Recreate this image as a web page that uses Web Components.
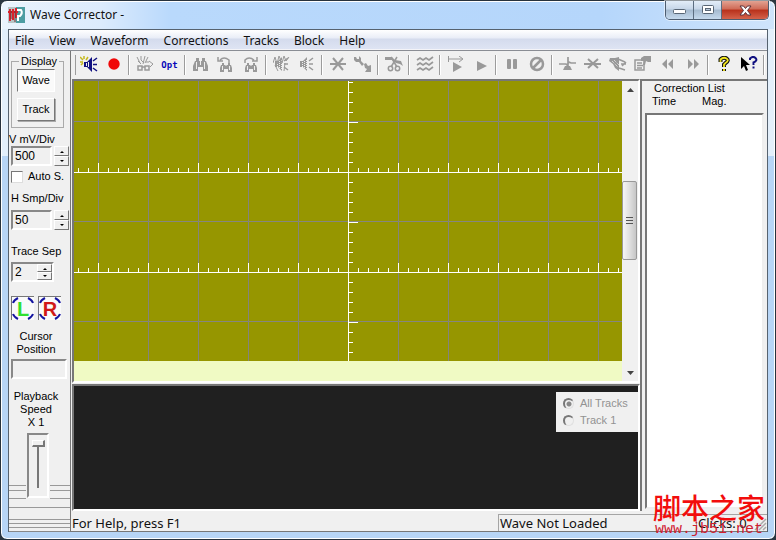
<!DOCTYPE html>
<html lang="en">
<head>
<meta charset="utf-8">
<title>Wave Corrector</title>
<style>
html,body{height:100%;margin:0}
body{background:#2b3640;font:12px/16px "Noto Sans","Noto Sans CJK SC",sans-serif;color:#111}
</style>
</head>
<body>
<app-window></app-window>
<script>
const define=(name,html,init)=>{
  const t=document.createElement('template');
  t.innerHTML='<style>:host,*{box-sizing:border-box}button,input{font:inherit;color:inherit;margin:0;padding:0;border:0;background:none;border-radius:0}svg{display:block}</style>'+html;
  customElements.define(name,class extends HTMLElement{
    constructor(){super();this.attachShadow({mode:'open'}).append(t.content.cloneNode(true));if(init)init(this,this.shadowRoot);}
  });
};

define('title-bar',`<style>
:host{display:flex;height:28px;padding-left:1px;flex:none}
.logo{margin-top:6px;flex:none}
h1{font:inherit;margin:5px 0 0 5px;flex:1;line-height:18px}
.btns{display:flex;height:19px;border:1px solid #4d5d70;border-top:0;border-radius:0 0 5px 5px;overflow:hidden;margin-right:0;box-shadow:0 0 0 1px #ffffff80}
button{width:28px;display:flex;align-items:center;justify-content:center;background:linear-gradient(#e3edf8,#c6d6e8 45%,#a5bacf 50%,#c5d9ed);border-right:1px solid #5c6d80}
button:last-child{width:46px;border:0;background:linear-gradient(#e2a292,#cf6a56 45%,#b8311b 50%,#d4624b)}
</style>
<svg class="logo" width="17" height="16" viewBox="0 0 17 16"><path fill="#b8c4c6" d="M0 0h17v16H0z"/><path fill="#4d9da2" d="M8 0h9v16H8z"/><path stroke="#fff" fill="none" stroke-width="2" d="M9 3h4q2 3-1 6h-2v5"/><path stroke="#d9202c" fill="none" stroke-width="2" d="M2 2v12M5 2v11M8 1v10M0 5h10"/><path stroke="#6d3037" d="M3 4v8M7 4v11" fill="none"/></svg>
<h1>Wave Corrector -</h1>
<div class="btns">
<button aria-label="Minimize"><svg width="13" height="12"><rect x=".5" y="5.5" width="12" height="4" rx="1" fill="#fff" stroke="#596675"/></svg></button>
<button aria-label="Maximize"><svg width="12" height="10"><rect x=".5" y=".5" width="11" height="8" rx="1" fill="#fff" stroke="#596675"/><rect x="3.5" y="3.5" width="5" height="2" fill="#b8c8da" stroke="#596675"/></svg></button>
<button aria-label="Close"><svg width="13" height="11" viewBox="0 0 13 11"><path d="M1 1h3.500l2 2.500L8.500 1H12L8.500 5.500 12 10H8.500l-2-2.500L4.500 10H1l3.500-4.500z" fill="#fff" stroke="#59303a"/></svg></button>
</div>`);

define('menu-bar',`<style>
:host{display:flex;gap:3px;height:21px;flex:none;background:linear-gradient(#fff,#e9edf7 40%,#d4dbed 45%,#dfe5f4);border-bottom:1px solid #8a8d94;box-shadow:inset 0 -1px #f4f4f8}
button{padding:0 6px;line-height:19px;height:20px}
</style><button>File</button><button>View</button><button>Waveform</button><button>Corrections</button><button>Tracks</button><button>Block</button><button>Help</button>`);

const G='#999';
const bino='<path d="M4 2h3v3H4zM10 2h3v3h-3zM3 5h5v4h1V5h5l2 5v5h-5v-4H6v4H1v-5z"/><path stroke="#eee" fill="none" d="M4.500 6v7M12.500 6v7"/>';
const binoS='<path d="M5 7h2v2H5zM11 7h2v2h-2zM4 9h4l1 1 1-1h4l1 3v4h-4v-3H7v3H3v-4z"/><path stroke="#eee" fill="none" d="M5.500 10v4M12.500 10v4"/>';
const spk=c=>`<path fill="${c}" d="M2 5h3l4-4v14l-4-4H2z"/><path stroke="#eee" stroke-dasharray="1 1" fill="none" d="M4.500 6v5M6.500 5v7M8.500 4v9"/><path stroke="${c}" fill="none" stroke-width="1.500" d="M11 8h4M11 5l4-3M11 11l4 3"/>`;
const icons={
 play0:['Play sound','<path fill="#101080" d="M4 6h3l5-5v15l-5-5H4z"/><path stroke="#eee" fill="none" d="M6.500 7v3M8.500 6v5"/><path stroke="#101080" fill="none" stroke-width="1.500" d="M13 5l4-3M13 8.500h4M13 12l4 3"/><path stroke="#c4b81c" fill="none" stroke-width="1.500" d="M4 0v3M0 1l3 3M0 6h3M8 1L6 4M1 9l2-2"/>'],
 rec:['Record','<circle cx="9" cy="8" r="5.700" fill="#f00808"/>'],
 scan:['Scan','<g fill="none" stroke="#999"><path d="M1 1l3 6M5 0v4l3 3M9 0L7 8M12 1L9 7M2 5l3 3M10 6h3M13 5l4 3-3 3"/><path stroke-width="1.500" d="M2 10h4v4H2zM9 10h4v4H9zM6 11h3"/></g>'],
 opt:['Options',''],
 find:['Find',bino], prev:['Find previous',binoS+'<path fill="none" stroke="#999" stroke-width="1.500" d="M3 4q4-4 9 0v3M1 1v4h5"/>'], next:['Find next',binoS+'<path fill="none" stroke="#999" stroke-width="1.500" d="M3 7V4q4-4 9 0M15 1v4h-5"/>'],
 hear:['Listen all',spk(G)+'<path stroke="#999" fill="none" d="M0 7l2-6 2 7 2-8 3 7 2-7 2 5 3-4M2 9l3 6M12 7l-1 8"/>'], hear1:['Listen',spk(G)],
 star:['Correct','<path fill="none" stroke="#999" stroke-width="2" d="M1 8h16M4 2l10 12M14 2L4 14"/>'],
 fix:['Repair','<path d="M0 1h2l1 2h2V0l2 2v3l3 3-2 2-3-4H2L0 4zM10 8l2-1 2 3 3-1v7h-6l2-3-2-1z"/>'],
 cut:['Cut','<path d="M0 1h7l3 3 6 1 2 5-3-2-4-1-4-3H0z"/><g fill="none" stroke="#999" stroke-width="1.500"><path d="M12 1L6 11M6 1l6 10"/><circle cx="5.500" cy="12.500" r="2.200"/><circle cx="12.500" cy="12.500" r="2.200"/></g>'],
 waves:['Waveforms','<path fill="none" stroke="#999" stroke-width="1.700" d="M1 4l3-2 3 2 3-2 3 2 4-3M1 9l3-2 3 2 3-2 3 2 4-3M1 14l3-2 3 2 3-2 3 2 4-3"/>'],
 playto:['Play from','<path d="M6 6l9 5-9 5z"/><path fill="none" stroke="#999" d="M1.500 0v6M1 3h14M12 0l4 3-4 3"/>'],
 play:['Play','<path d="M5 5l10 5-10 5z"/>'],
 pause:['Pause','<rect x="4" y="3" width="4" height="10" rx="1"/><rect x="10" y="3" width="4" height="10" rx="1"/>'],
 stop:['Stop','<g fill="none" stroke="#999" stroke-width="2.500"><circle cx="9" cy="8" r="6"/><path d="M5 12l8-8"/></g>'],
 mark:['Set marker','<path d="M6 10h5l2 4H4z"/><path fill="none" stroke="#999" stroke-width="1.700" d="M0 8h7l1 1 2-3 2 1h5M9 1v10"/>'],
 unmark:['Remove marker','<path fill="none" stroke="#999" stroke-width="2" d="M0 8h17M4 3l10 9M14 3L4 12"/>'],
 hearm:['Listen to markers','<path d="M1 2h5l4-1v14l-4-3-2-4-4-3z"/><path fill="none" stroke="#eee" stroke-dasharray="1 1" d="M3 5l6 6M5 4l5 5"/><path fill="none" stroke="#999" stroke-width="1.500" d="M9 3l7 3M12 8h5M10 12l6 2M13 10l4-4"/>'],
 props:['Properties','<path fill="none" stroke="#999" stroke-width="1.500" d="M1 4h9v10H1zM3 7h5M3 9.500h6M3 12h5"/><path d="M7 2l3-2h7v6h-3l-2-1-1 4H9l1-4H7z"/>'],
 rew:['Back','<path d="M8 3v10L3 8zM14 3v10L9 8z"/>'], ffw:['Forward','<path d="M4 3v10l5-5zM10 3v10l5-5z"/>'],
 help:['Help','<path fill="none" stroke="#111" stroke-width="4" d="M5.500 6V3.500q3-3 6-1t-1 4.500L9 8.500V11M9 13v2"/><path fill="none" stroke="#f2e51e" stroke-width="1.800" d="M5.500 6V3.500q3-3 6-1t-1 4.500L9 8.500V11M9 13v2"/>'],
 what:['Context help','<path fill="#000" d="M1 1v12l3-3 2 5 2-1-2-5h4z"/><path fill="none" stroke="#101080" stroke-width="2" d="M10 4V2.500q3-3 5.500-.5t-2 4.500V9M13.500 10.500v2"/>']
};
define('tool-bar',`<style>
:host{display:flex;height:27px;flex:none;align-items:center;padding-left:2px;background:#f0f0f0}
button{width:25px;height:25px;flex:none;display:flex;align-items:center;justify-content:center}
i{width:6px;height:20px;flex:none;background:linear-gradient(90deg,transparent 2px,#9c9c9c 2px,#9c9c9c 3px,#fff 3px,#fff 4px,transparent 4px)}
i:first-of-type{width:3px}
.opt{font:bold 9px "DejaVu Sans Mono",monospace;color:#0808b8}
</style>`,(el,r)=>{
  for(const k of '| play0 rec | scan opt | find prev next | hear hear1 | star fix | cut | waves | playto play | pause stop | mark unmark hearm props rew ffw | help what |'.split(' ')){
    if(k==='|'){r.append(document.createElement('i'));continue;}
    const b=document.createElement('button');
    if(k==='opt'){b.className='opt';b.textContent='Opt';}
    else{b.setAttribute('aria-label',icons[k][0]);b.innerHTML='<svg width="18" height="17" viewBox="0 0 18 17" fill="#999">'+icons[k][1]+'</svg>';}
    r.append(b);
  }
});

define('spin-buttons',`<style>
:host{display:flex;flex-direction:column;width:15px;height:20px;flex:none}
button{flex:1;display:flex;align-items:center;justify-content:center;background:#f0f0f0;border-top:1px solid #fff;border-left:1px solid #fff;border-bottom:1px solid #777;border-right:1px solid #777}
</style><button aria-label="Increase"><svg width="5" height="3"><path d="M1 3h4L3 1z"/></svg></button><button aria-label="Decrease"><svg width="5" height="3"><path d="M1 0h4L3 2z"/></svg></button>`);

define('channel-button',`<style>
:host{display:block;width:23px;height:24px}
button{width:100%;height:100%;position:relative;background:#fafafa;border-top:1px solid #777;border-left:1px solid #777;font:bold 20px/22px "Liberation Sans",sans-serif;color:var(--c)}
svg{position:absolute;inset:0}
</style><button><svg width="22" height="23" viewBox="0 0 22 23" fill="none" stroke="#1414a0" stroke-width="2"><path d="M1 6Q2 3 6 1M16 1q4 2 5 5M1 17q1 3 5 5M16 22q4-2 5-5"/></svg><slot></slot></button>`);

define('side-panel',`<style>
:host{display:flex;flex-direction:column;width:62px;flex:none;color:#000;font:11px/13px "Liberation Sans",Arial,sans-serif;border-right:1px solid #777;padding:4px 1px 0 2px;
background:linear-gradient(#888,#888) 0 100%/100% 1px no-repeat,
linear-gradient(#999,#999) 0 calc(100% - 4px)/100% 1px no-repeat,linear-gradient(#999,#999) 0 calc(100% - 8px)/100% 1px no-repeat,linear-gradient(#999,#999) 0 calc(100% - 12px)/100% 1px no-repeat,linear-gradient(#999,#999) 0 calc(100% - 24px)/100% 1px no-repeat,linear-gradient(#999,#999) 0 calc(100% - 33px)/100% 1px no-repeat,linear-gradient(#999,#999) 0 calc(100% - 41px)/100% 1px no-repeat,linear-gradient(#999,#999) 0 calc(100% - 46px)/100% 1px no-repeat,#f0f0f0}
fieldset{margin:0 5px 5px 0;padding:1px 5px 7px;border:1px solid #aaa;display:flex;flex-direction:column;gap:6px;height:73px;min-width:0}
legend{padding:0 2px;margin:0 auto 0 2px}
.b{height:23px;width:38px;background:#f0f0f0;border:1px solid #fff;border-right-color:#777;border-bottom-color:#777;box-shadow:1px 1px #aaa}
.b.on{background:#fafafa;border-color:#777 #fff #fff #777;box-shadow:none}
.row{display:flex;gap:2px;height:20px}
.row input,.cur{flex:1;min-width:0;width:100%;height:20px;padding:0 2px 1px;background:#f0f0f0;border:2px solid;border-color:#888 #fff #fff #888;font-size:12px}
label{display:block;white-space:nowrap}
.v{margin-left:-2px;}
.chk{display:flex;gap:5px;align-items:center;margin:4px 0 9px;height:13px}
.chk input{appearance:none;width:12px;height:12px;background:#fff;border:1px solid;border-color:#777 #ddd #ddd #777;}
.row.sep{border:2px solid;border-color:#888 #fff #fff #888;width:43px;height:20px;gap:0}
.row.sep input{border:0;height:16px}.sep spin-buttons{height:16px}
.lr{display:flex;gap:4px;margin:14px 0 10px}
.c{text-align:center;padding-right:8px}
.cur{flex:none;width:56px;margin:3px 0 11px}
.sl{width:22px;height:65px;flex:none;margin:4px 0 0 16px;padding:5px 3px;background:#f0f0f0;border:2px solid;border-color:#888 #fff #fff #888;outline:1px solid #f0f0f0}
.sl input{appearance:none;writing-mode:vertical-lr;width:13px;height:48px;display:block;background:linear-gradient(90deg,transparent 5px,#777 5px,#777 7px,transparent 7px)}
.sl input::-webkit-slider-thumb{appearance:none;width:13px;height:7px;background:#f0f0f0;border:1px solid #fff;border-right:2px solid #777;border-bottom:2px solid #777}
</style>
<fieldset><legend>Display</legend><button class="b on">Wave</button><button class="b">Track</button></fieldset>
<label class="v" for="v">V mV/Div</label>
<div class="row"><input id="v" value="500"><spin-buttons></spin-buttons></div>
<label class="chk"><input type="checkbox">Auto S.</label>
<label for="h" style="margin-bottom:5px">H Smp/Div</label>
<div class="row"><input id="h" value="50"><spin-buttons></spin-buttons></div>
<label for="t" style="margin:15px 0 4px">Trace Sep</label>
<div class="row sep"><input id="t" value="2"><spin-buttons></spin-buttons></div>
<div class="lr"><channel-button style="--c:#2fe02f">L</channel-button><channel-button style="--c:#d01818">R</channel-button></div>
<label class="c" for="c">Cursor<br>Position</label><input class="cur" id="c">
<label class="c" for="s">Playback<br>Speed<br>X 1</label>
<div class="sl"><input id="s" type="range" min="0" max="10" value="0"></div>`);

define('scope-view',`<style>
:host{display:flex;flex:300;min-height:0;border:2px solid;border-color:#777 #fff #fff #777}
.plot{flex:1;min-width:0;background:#f0fac4;display:flex;flex-direction:column}
.plot>svg{flex:1;width:100%;min-height:0;background:linear-gradient(#868680 1px,transparent 1px) 0 40px/100% 100px,#969600}
.plot::after{content:"";height:20px;flex:none}
.bar{width:16px;display:flex;flex-direction:column;background:#f0f0f0}
.bar button{height:17px;flex:none;display:flex;align-items:center;justify-content:center}
.up{flex:83}.dn{flex:104}
.bar .thumb{flex:78;margin-right:1px;border:1px solid #999;border-radius:2px;background:linear-gradient(90deg,#f6f6f6,#e0e0e0 50%,#c6c6c6)}
</style>
<div class="plot"><svg shape-rendering="crispEdges"><defs>
<pattern id="g" patternUnits="userSpaceOnUse" width="50" height="100"><rect fill="#84847c" width="1" height="100"/></pattern>
<pattern id="h" patternUnits="userSpaceOnUse" x="0" y="82" width="50" height="100"><path fill="#fff" d="M0 9h50v1H0zM0 0h1v9H0zM10 5h1v4h-1zM20 5h1v4h-1zM30 5h1v4h-1zM40 5h1v4h-1z"/></pattern>
<pattern id="u" patternUnits="userSpaceOnUse" x="0" y="41" width="20" height="100"><path fill="#fff" d="M0 0h1v100H0zM0 0h10v1H0zM0 10h5v1H0zM0 20h5v1H0zM0 30h5v1H0zM0 40h5v1H0zM0 60h5v1H0zM0 70h5v1H0zM0 80h5v1H0zM0 90h5v1H0z"/></pattern></defs>
<svg x="50%" overflow="visible"><path fill="url(#g)" d="M-2000 0h4000v2000h-4000z"/><path fill="url(#h)" d="M-2000 80h4000v2000h-4000z"/><path fill="url(#u)" d="M0 0h15v2000H0z"/></svg></svg></div>
<div class="bar"><button aria-label="Scroll up"><svg width="7" height="4"><path fill="#444" d="M0 4h7L3.500 0z"/></svg></button><span class="up"></span><button class="thumb" aria-label="Scroll thumb"><svg width="7" height="9"><path stroke="#555" d="M0 1.500h7M0 4.500h7M0 7.500h7"/></svg></button><span class="dn"></span><button aria-label="Scroll down"><svg width="7" height="4"><path fill="#444" d="M0 0h7L3.500 4z"/></svg></button></div>`);

define('track-view',`<style>
:host{display:flex;flex:117;min-height:0;justify-content:flex-end;align-items:flex-start;background:#202020;border:2px solid;border-color:#777 #fff #fff #777;padding-top:6px;font:11px/17px "Liberation Sans",Arial,sans-serif}
form{background:#f0f0f0;width:82px;height:40px;padding:3px 0 0 7px;color:#929292;margin:0}
label{display:flex;gap:6px;align-items:center;height:17px}
input{appearance:none;width:11px;height:11px;border:1px solid #e0e0e0;border-top-color:#777;border-left-color:#777;border-width:2px 1px 1px 2px;border-radius:50%}
input:checked{background:radial-gradient(#888 2px,transparent 3px)}
</style><form><label><input type="radio" name="t" checked disabled>All Tracks</label><label><input type="radio" name="t" disabled>Track 1</label></form>`);

define('correction-list',`<style>
:host{display:flex;flex-direction:column;width:126px;flex:none;border-top:2px solid #777;border-left:1px solid #777;padding:1px 3px 2px 3px;background:#f0f0f0;font:11px/13px "Liberation Sans",Arial,sans-serif;color:#000}
table{border-collapse:collapse;width:100%}
caption{text-align:left;padding-left:9px}
th{font-weight:400;text-align:left;padding:0 0 0 7px}th:first-child{width:50px}
.list{flex:1;margin-top:5px;background:#fff;border:2px solid;border-color:#777 #eee #eee #777}
</style><table><caption>Correction List</caption><tr><th scope="col">Time</th><th scope="col">Mag.</th></tr></table><div class="list"></div>`);

define('status-bar',`<style>
:host{display:flex;height:18px;flex:none;font-size:13px;line-height:16px;background:#f0f0f0;border-bottom:1px solid #777}
span{border-top:1px solid #a5a5a5;border-left:1px solid #a5a5a5;padding-left:1px;white-space:nowrap}
.a{flex:1;border-color:transparent;padding:0}.b{width:198px}.c{width:71px;display:flex;justify-content:space-between;align-items:flex-end}
</style><span class="a">For Help, press F1</span><span class="b">Wave Not Loaded</span><span class="c">Clicks: 0<svg width="13" height="13"><path stroke="#aaa" stroke-width="1.500" d="M1 12L12 1M5 12l7-7M9 12l3-3"/></svg></span>`);

define('site-mark',`<style>
:host{position:absolute;right:10px;bottom:2px;color:#f20d0d;text-align:center;pointer-events:none}
b{display:block;font:500 28px/32px "Noto Sans CJK SC",sans-serif}
span{display:block;font:15px/14px "Liberation Mono",monospace;color:#cf2030}
</style><b lang="zh">脚本之家</b><span>www.jb51.net</span>`);

define('app-window',`<style>
:host{display:flex;flex-direction:column;height:100vh;position:relative;border:1px solid #27323d;border-radius:7px;padding:0 7px 7px;
background:linear-gradient(90deg,#eaf3fd 0,#dcebfc 100px,#b9d9fc 170px,#b5d6fb 600px,#cfe4fb) 0 0/100% 28px no-repeat,linear-gradient(#e3effb 155px,#b7d5f6 155px);
box-shadow:inset 0 0 0 1px #fff}
title-bar{margin:0 -1px}
.client{flex:1;min-height:0;display:flex;flex-direction:column;border:1px solid #56626f;border-bottom:0;background:#f0f0f0}
.main{flex:1;min-height:0;display:flex}
.right{flex:1;min-width:0;display:flex;flex-direction:column}
.work{flex:1;min-height:0;display:flex;padding:1px 0 3px 1px}
.panes{flex:1;min-width:0;display:flex;flex-direction:column;gap:1px;border-right:1px solid #777}
</style>
<title-bar></title-bar>
<div class="client"><menu-bar></menu-bar><div class="main"><side-panel></side-panel>
<div class="right"><tool-bar></tool-bar><div class="work"><div class="panes"><scope-view></scope-view><track-view></track-view></div><correction-list></correction-list></div><status-bar></status-bar></div></div></div>
<site-mark></site-mark>`);
</script>
</body>
</html>
